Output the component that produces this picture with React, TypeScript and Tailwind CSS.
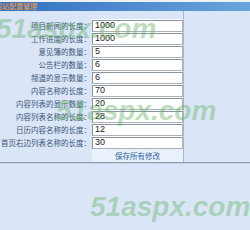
const rows = [
  { label: '项目新闻的长度', value: '1000' },
  { label: '工作进度的长度', value: '1000' },
  { label: '意见簿的数量', value: '5' },
  { label: '公告栏的数量', value: '6' },
  { label: '频道的显示数量', value: '6' },
  { label: '内容名称的长度', value: '70' },
  { label: '内容列表的显示数量', value: '20' },
  { label: '内容列表名称的长度', value: '28' },
  { label: '日历内容名称的长度', value: '12' },
  { label: '首页右边列表名称的长度', value: '30' },
];

export default function App() {
  return (
    <div className="relative w-[250px] h-[230px] overflow-hidden bg-[#dae6f7] font-['Noto_Sans_CJK_SC',sans-serif]">
      <div className="h-[2px] bg-[#eef2f7]" />
      <div className="h-[9px] bg-gradient-to-r from-[#3270c0] to-[#6aa4dc] flex items-center overflow-hidden">
        <span className="ml-[-5px] text-[7px] leading-none text-[#ff9d2a] whitespace-nowrap">网站配置管理</span>
      </div>

      <div className="w-[184px] border-r border-[#a9b7c6] pt-[8px]">
        {rows.map((r) => (
          <div key={r.label} className="flex h-[13px] items-center">
            <div className="w-[92px] pr-[1px] text-right text-[7.5px] leading-none text-[#3e5578] whitespace-nowrap">
              {r.label}：
            </div>
            <div className="flex-1 h-[13px] bg-white flex items-center">
              <div className="w-full h-[12px] border border-[#aab2ba] border-t-[#8a949e] border-l-[#8a949e] bg-white flex items-center pl-[2px] text-[9px] leading-none text-[#222] font-['Liberation_Sans',sans-serif]">
                {r.value}
              </div>
            </div>
          </div>
        ))}
        <div className="flex h-[13px] items-center">
          <div className="w-[92px]" />
          <div className="flex-1 h-[13px] bg-[#e9f2fc] flex items-center justify-center text-[7.5px] leading-none text-[#2f5f9e]">
            保存所有修改
          </div>
        </div>
      </div>
      <div className="h-[1px] bg-[#8e9cab]" />
      <div className="h-[1px] bg-[#c9d6e6]" />

      <span className="absolute left-[-4px] top-[8px] text-[28px] font-bold italic text-[#6cb46c]/45 font-['Liberation_Sans',sans-serif] pointer-events-none">51aspx.com</span>
      <span className="absolute left-[56px] top-[90px] text-[28px] font-bold italic text-[#6cb46c]/45 font-['Liberation_Sans',sans-serif] pointer-events-none">51aspx.com</span>
      <span className="absolute left-[90px] top-[186px] text-[28px] font-bold italic text-[#6cb46c]/45 font-['Liberation_Sans',sans-serif] pointer-events-none">51aspx.com</span>
    </div>
  );
}
